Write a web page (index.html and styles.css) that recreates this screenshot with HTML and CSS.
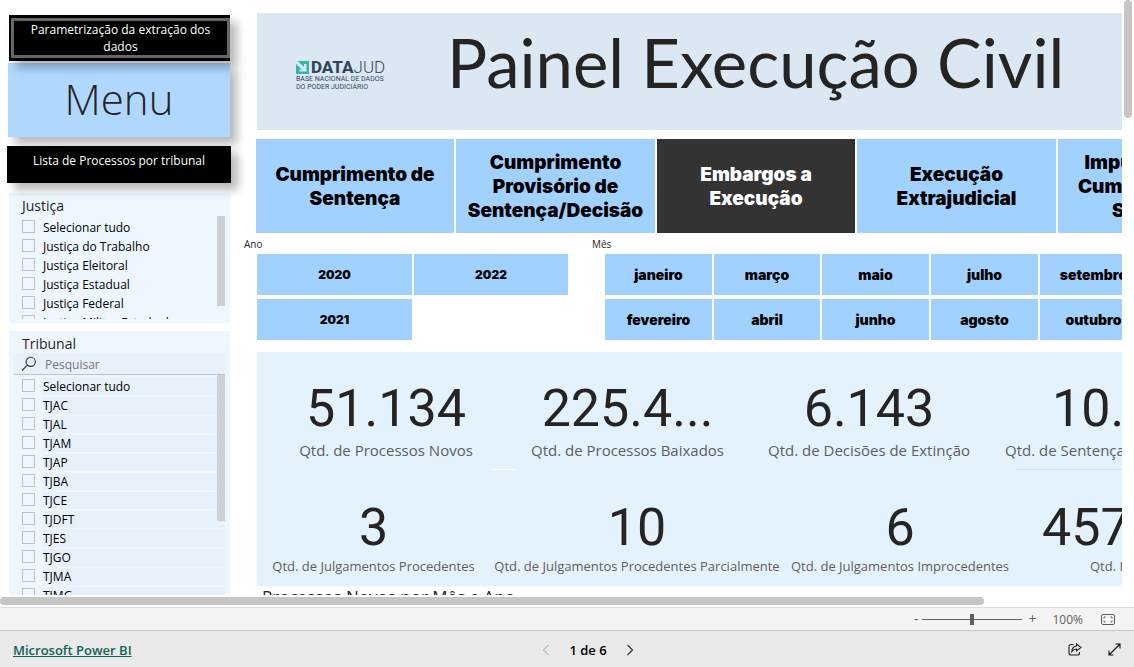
FILE: index.html
```html
<!DOCTYPE html>
<html lang="pt-BR">
<head>
<meta charset="utf-8">
<title>Painel Execução Civil</title>
<link rel="stylesheet" href="styles.css">
</head>
<body>
<div class="viewport">
  <div class="report">
    <aside class="sidebar">
      <button class="action action--framed"><span>Parametrização da extração dos dados</span></button>
      <h2 class="menu">Menu</h2>
      <button class="action action--plain">Lista de Processos por tribunal</button>
      <section class="filter filter--justice">
        <h3 class="filter__title">Justiça</h3>
        <div class="filter__body">
          <div class="filter__list">
            <label><input type="checkbox"><span>Selecionar tudo</span></label>
            <label><input type="checkbox"><span>Justiça do Trabalho</span></label>
            <label><input type="checkbox"><span>Justiça Eleitoral</span></label>
            <label><input type="checkbox"><span>Justiça Estadual</span></label>
            <label><input type="checkbox"><span>Justiça Federal</span></label>
            <label><input type="checkbox"><span>Justiça Militar Estadual</span></label>
          </div>
          <div class="filter__scroll"></div>
        </div>
      </section>
      <section class="filter filter--court">
        <h3 class="filter__title">Tribunal</h3>
        <div class="search">
          <svg width="16" height="16" viewBox="0 0 16 16" fill="none" stroke="#333" stroke-width="1.1"><circle cx="9.7" cy="5.8" r="4.6"/><path d="M6.3 9.1 1 14.5"/></svg>
          <input type="text" placeholder="Pesquisar" aria-label="Pesquisar">
        </div>
        <div class="filter__body">
          <div class="filter__list">
            <label><input type="checkbox"><span>Selecionar tudo</span></label>
            <label><input type="checkbox"><span>TJAC</span></label>
            <label><input type="checkbox"><span>TJAL</span></label>
            <label><input type="checkbox"><span>TJAM</span></label>
            <label><input type="checkbox"><span>TJAP</span></label>
            <label><input type="checkbox"><span>TJBA</span></label>
            <label><input type="checkbox"><span>TJCE</span></label>
            <label><input type="checkbox"><span>TJDFT</span></label>
            <label><input type="checkbox"><span>TJES</span></label>
            <label><input type="checkbox"><span>TJGO</span></label>
            <label><input type="checkbox"><span>TJMA</span></label>
            <label><input type="checkbox"><span>TJMG</span></label>
          </div>
          <div class="filter__scroll"></div>
        </div>
      </section>
    </aside>

    <main class="main">
      <header class="banner">
        <div class="logo">
          <div class="logo__name">
            <svg width="14" height="13" viewBox="0 0 14 13"><path fill="#35b5a5" d="M0 0h13v13H0z"/><path fill="#dbe8f3" d="M0 0h1.500l6.500 6V3h2.500v7.500H3.500V8.500H6L0 3z"/><path fill="#35b5a5" d="M0 5 3 8H0z"/></svg>
            <span><b>DATA</b>JUD</span>
          </div>
          <p>BASE NACIONAL DE DADOS</p>
          <p>DO PODER JUDICIÁRIO</p>
        </div>
        <h1>Painel Execução Civil</h1>
      </header>

      <nav class="tabs">
        <button>Cumprimento de Sentença</button>
        <button>Cumprimento Provisório de Sentença/Decisão</button>
        <button class="is-active">Embargos a Execução</button>
        <button>Execução Extrajudicial</button>
        <button>Impugnação ao Cumprimento de Sentença</button>
      </nav>

      <div class="slicers">
        <section class="slicer">
          <h4>Ano</h4>
          <div class="tiles tiles--year">
            <button>2020</button><button>2021</button><button>2022</button>
          </div>
        </section>
        <section class="slicer">
          <h4>Mês</h4>
          <div class="tiles tiles--month">
            <button>janeiro</button><button>fevereiro</button>
            <button>março</button><button>abril</button>
            <button>maio</button><button>junho</button>
            <button>julho</button><button>agosto</button>
            <button>setembro</button><button>outubro</button>
          </div>
        </section>
      </div>

      <div class="kpis">
        <div class="kpi-row kpi-row--top">
          <div class="kpi kpi--first"><strong>51.134</strong><span>Qtd. de Processos Novos</span></div>
          <div class="kpi"><strong>225.4...</strong><span>Qtd. de Processos Baixados</span></div>
          <div class="kpi"><strong>6.143</strong><span>Qtd. de Decisões de Extinção</span></div>
          <div class="kpi kpi--last"><strong>10.8</strong><span>Qtd. de Sentenças</span></div>
        </div>
        <div class="kpi-row kpi-row--bottom">
          <div class="kpi"><strong>3</strong><span>Qtd. de Julgamentos Procedentes</span></div>
          <div class="kpi"><strong>10</strong><span>Qtd. de Julgamentos Procedentes Parcialmente</span></div>
          <div class="kpi"><strong>6</strong><span>Qtd. de Julgamentos Improcedentes</span></div>
          <div class="kpi kpi--last"><strong>457</strong><span>Qtd. I</span></div>
        </div>
      </div>
      <h3 class="chart-title">Processos Novos por Mês e Ano</h3>
    </main>
  </div>
  <div class="vscroll"></div>
</div>
<div class="hscroll"><div></div></div>

<div class="zoombar">
  <button aria-label="Reduzir">-</button>
  <input type="range" min="0" max="100" value="50" aria-label="Zoom">
  <button aria-label="Ampliar">+</button>
  <output>100%</output>
  <button class="fit" aria-label="Ajustar à página">
    <svg width="14" height="11" viewBox="0 0 14 11" fill="none" stroke="#605e5c"><rect x=".5" y=".5" width="13" height="10" rx="1.5"/><path d="M3 4.500V3h1.500M9.500 3H11v1.500M11 6.500V8H9.500M4.500 8H3V6.500"/></svg>
  </button>
</div>

<footer class="footer">
  <a href="#">Microsoft Power BI</a>
  <div class="pager">
    <button disabled aria-label="Página anterior"><svg width="8" height="12" viewBox="0 0 8 12" fill="none" stroke="#bdbdbd" stroke-width="1.2"><path d="M6.500 1 1.500 6l5 5"/></svg></button>
    <span>1 de 6</span>
    <button aria-label="Próxima página"><svg width="8" height="12" viewBox="0 0 8 12" fill="none" stroke="#333" stroke-width="1.2"><path d="m1.500 1 5 5-5 5"/></svg></button>
  </div>
  <div class="footer__tools">
    <button aria-label="Compartilhar"><svg width="14" height="13" viewBox="0 0 14 13" fill="none" stroke="#222" stroke-width="1.1"><path d="M5.500 1.500H3a2 2 0 0 0-2 2v6.500a2 2 0 0 0 2 2h6.500a2 2 0 0 0 2-2V9"/><path d="M8.500 1 13 4.500 8.500 8V6C6.500 6 5 6.700 3.800 8.500 4 5.500 5.500 3.300 8.500 3z"/></svg></button>
    <button aria-label="Tela cheia"><svg width="13" height="13" viewBox="0 0 13 13" fill="none" stroke="#111" stroke-width="1.1"><path d="M1 12 12 1M7.500 1H12v4.500M1 7.500V12h4.500"/></svg></button>
  </div>
</footer>
</body>
</html>
```

FILE: styles.css
```css
* { box-sizing: border-box; }
body {
  margin: 0;
  height: 100vh;
  display: flex;
  flex-direction: column;
  overflow: hidden;
  background: #fff;
  color: #252423;
  font-family: "Open Sans", "Noto Sans", sans-serif;
  font-size: 12px;
}
h1, h2, h3, h4, p { margin: 0; font-weight: 400; }
button { font: inherit; color: inherit; border: 0; padding: 0; background: none; cursor: pointer; }

.viewport { flex: 1; min-height: 0; display: flex; }
.report { flex: 1; min-width: 0; display: flex; gap: 14px; padding-left: 8px; overflow: hidden; }
.vscroll { width: 8px; height: 118px; margin: 0 2px; border-radius: 4px; background: #c6c6c6; }
.hscroll { padding: 2px 0; }
.hscroll div { width: 984px; max-width: 100%; height: 8px; border-radius: 4px; background: #c6c6c6; }

/* Sidebar */
.sidebar { flex: 0 0 222px; display: flex; flex-direction: column; padding-top: 15px; }
.action { background: #000; color: #fff; line-height: 17px; box-shadow: 7px 7px 9px rgba(0, 0, 0, .28); }
.action--framed { position: relative; height: 46px; padding: 3px 0 3px 2px; margin: 0 0 2px 1px; }
.action--framed span { display: block; height: 40px; border: 3px solid #666; }
.menu {
  height: 74px; background: #b0d8ff; text-align: center;
  font-size: 42px; font-weight: 300; line-height: 72px;
  box-shadow: 7px 7px 9px rgba(0, 0, 0, .28);
}
.action--plain { position: relative; height: 37px; margin: 9px -1px 10px; padding-bottom: 9px; }
.filter { margin-left: 1px; padding: 4px 5px 4px; background: #eef7ff; display: flex; flex-direction: column; }
.filter--justice { height: 130px; margin-bottom: 8px; }
.filter--court { flex: 1; min-height: 0; padding-bottom: 0; }
.filter__title { height: 19px; font-size: 14px; line-height: 17px; padding-left: 8px; }
.filter__body { flex: 1; min-height: 0; display: flex; position: relative; overflow: hidden; }
.filter__list { flex: 1; padding-top: 2px; }
.filter__list label { display: flex; height: 19px; align-items: center; padding-left: 8px; color: #000; }
.filter__list span { flex: 1; margin-left: 8px; line-height: 17px; height: 17px; }
.filter--court .filter__list span { background: #e6f1fc; }
.filter__list input { appearance: none; width: 13px; height: 13px; margin: 0 0 2px; border: 1px solid #c4c2c0; }
.filter__scroll { position: absolute; right: 0; top: 0; width: 8px; height: 90px; background: #cdd0d5; }
.filter--court .filter__scroll { height: 146px; }
.search { display: flex; align-items: center; height: 21px; padding-left: 7px; gap: 6px; background: #e6f1fc; border-bottom: 1px solid #c4c2c0; }
.search input { flex: 1; min-width: 0; border: 0; background: none; font: inherit; outline: 0; }
.search input::placeholder { color: #777; }

/* Report canvas */
.main { flex: 1; min-width: 0; padding-top: 13px; overflow: hidden; }
.banner { display: flex; height: 117px; margin-left: 13px; background: #dbe8f3; }
.banner h1 { font-family: Lato, sans-serif; font-size: 67px; line-height: 98px; white-space: nowrap; }
.logo { flex: 0 0 190px; padding: 46px 0 0 39px; color: #30475c; font-size: 7px; line-height: 8px; }
.logo__name { display: flex; align-items: center; gap: 1px; height: 16px; font-family: Roboto, sans-serif; font-size: 17px; font-weight: 300; }
.logo__name b { font-weight: 800; }
.logo p { white-space: nowrap; font-family: Roboto, sans-serif; }

.tabs { display: grid; grid-template-columns: 198px 199px 198px 199px 199px; gap: 2px; margin: 9px 0 5px 12px; }
.tabs button {
  height: 94px; padding: 1px 4px 0; background: #a0d1ff; color: #000;
  font-family: Inter, sans-serif; font-size: 19px; font-weight: 900; line-height: 24px;
}
.tabs .is-active { background: #333; color: #fff; }

.slicers { display: flex; }
.slicer { padding-left: 13px; }
.slicer:first-child { flex: 0 0 348px; }
.slicer h4 { font-size: 10px; line-height: 13px; margin: 0 0 3px -13px; }
.tiles { display: grid; grid-auto-flow: column; grid-template-rows: 41px 41px; gap: 4px 2px; }
.tiles--year { grid-template-columns: 155px 154px; }
.tiles--month { grid-template-columns: 107px 106px 107px 107px 107px; }
.tiles button { background: #a0d1ff; color: #000; font-family: Inter, sans-serif; font-weight: 900; }
.tiles--year button { font-size: 12px; }
.tiles--month button { font-size: 14px; }

.kpis { margin: 12px 0 0 13px; background: #e4f2fe; }
.kpi-row { display: grid; height: 117px; }
.kpi-row--top { grid-template-columns: 258px 225px 258px 220px; }
.kpi-row--bottom { grid-template-columns: 233px 294px 232px 180px; }
.kpi { position: relative; display: flex; flex-direction: column; align-items: center; white-space: nowrap; color: #605e5c; }
.kpi strong { font-family: Roboto, sans-serif; font-size: 52px; font-weight: 400; line-height: 60px; color: #252423; }
.kpi-row--top .kpi { padding-top: 27px; font-size: 15px; line-height: 22px; }
.kpi-row--bottom .kpi { padding-top: 29px; font-size: 13px; line-height: 16px; }
.kpi--first::after { content: ""; position: absolute; right: 0; bottom: -1px; width: 24px; height: 1px; background: #fff; }
.kpi--last { align-items: flex-start; }
.kpi-row--top .kpi--last { padding-left: 7px; }
.kpi-row--top .kpi--last strong { padding-left: 47px; }
.kpi-row--bottom .kpi--last { border-top: 1px solid #c8e4ff; padding: 28px 0 0 26px; }
.kpi-row--bottom .kpi--last span { padding-left: 48px; }
.chart-title { padding-left: 18px; font-size: 17px; line-height: 22px; }

/* Bars under the canvas */
.zoombar { display: flex; align-items: center; justify-content: flex-end; height: 24px; padding-right: 19px; background: #f4f4f4; border-top: 1px solid #ddd; border-bottom: 1px solid #c8c8c8; color: #605e5c; }
.zoombar button { font-size: 14px; line-height: 20px; }
.zoombar input { appearance: none; width: 100px; height: 12px; margin: 0 6px 0 4px; background: linear-gradient(#605e5c, #605e5c) center / 100% 1px no-repeat; }
.zoombar input::-webkit-slider-thumb { appearance: none; width: 4px; height: 11px; background: #605e5c; }
.zoombar output { margin: 0 18px 0 16px; }
.zoombar .fit { display: flex; }
.footer { display: grid; grid-template-columns: 1fr auto 1fr; align-items: center; height: 36px; padding: 0 13px; background: #e9e9e9; }
.footer a { justify-self: start; color: #0f6259; font-size: 13px; font-weight: 600; padding-top: 2px; }
.pager { display: flex; align-items: center; gap: 19px; padding: 1px 0 0 42px; color: #000; font-size: 13px; font-weight: 600; }
.footer__tools { justify-self: end; display: flex; gap: 26px; }
.footer button { display: flex; }
```
